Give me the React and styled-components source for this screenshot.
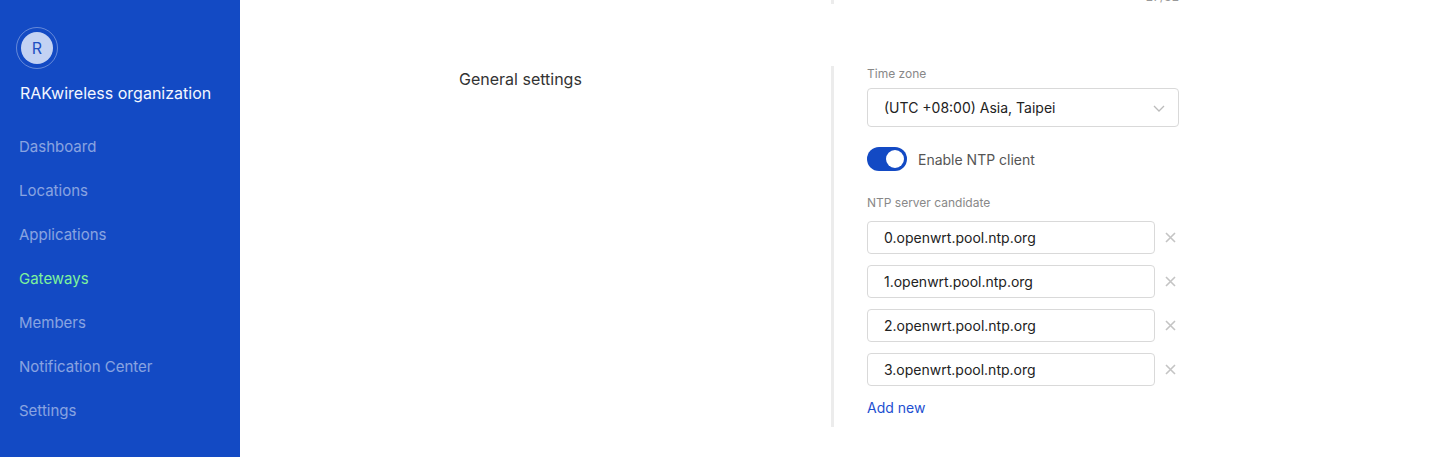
import React from 'react'
import styled, { createGlobalStyle } from 'styled-components'

const GlobalStyle = createGlobalStyle`
  html, body { margin: 0; padding: 0; background: #fff; }
  body { font-family: Inter, "Noto Sans", sans-serif; overflow: hidden; }
  * { box-sizing: border-box; }
`

const Layout = styled.div`
  display: flex;
  height: 457px;
  overflow: hidden;
`

const Sidebar = styled.aside`
  width: 240px;
  flex-shrink: 0;
  background: #134ac4;
  padding: 27px 0 0 0;
`

const Avatar = styled.div`
  margin-left: 16px;
  width: 42px;
  height: 42px;
  border-radius: 50%;
  border: 1px solid rgba(255, 255, 255, 0.35);
  display: flex;
  align-items: center;
  justify-content: center;
  span {
    width: 32px;
    height: 32px;
    border-radius: 50%;
    background: #c3d2f3;
    color: #1e4fc2;
    font-size: 16px;
    display: flex;
    align-items: center;
    justify-content: center;
  }
`

const OrgName = styled.div`
  margin: 14px 0 0 20px;
  color: #f4f7ff;
  font-size: 16px;
  line-height: 20px;
`

const Nav = styled.nav`
  margin-top: 34px;
  display: flex;
  flex-direction: column;
`

const NavItem = styled.a`
  display: block;
  padding-left: 19px;
  height: 44px;
  line-height: 20px;
  font-size: 15px;
  color: ${p => (p.$active ? '#7ef29b' : 'rgba(255,255,255,0.5)')};
  text-decoration: none;
`

const Main = styled.main`
  flex: 1;
  display: flex;
  justify-content: center;
`

const Container = styled.div`
  width: 764px;
  margin-left: -2px;
  display: flex;
  flex-direction: column;
`

const Section = styled.section`
  display: grid;
  grid-template-columns: 373px 1fr;
  margin-top: ${p => p.$top || '0'};
`

const SectionTitle = styled.h3`
  margin: 0;
  padding: 3px 0 0 1px;
  font-size: 16px;
  font-weight: 400;
  color: #333;
`

const Fields = styled.div`
  border-left: 3px solid #ececec;
  padding: 0 0 10px 33px;
  display: flex;
  flex-direction: column;
`

const Counter = styled.div`
  width: 312px;
  text-align: right;
  font-size: 12px;
  color: #999;
  line-height: 14px;
`

const Label = styled.div`
  font-size: 12px;
  color: #888;
  line-height: 16px;
  margin-bottom: ${p => p.$gap || '6px'};
`

const Select = styled.div`
  width: 312px;
  height: 39px;
  border: 1px solid #d9d9d9;
  border-radius: 4px;
  display: flex;
  align-items: center;
  justify-content: space-between;
  padding: 0 12px 0 16px;
  font-size: 14px;
  color: #222;
`

const ToggleRow = styled.div`
  display: flex;
  align-items: center;
  gap: 11px;
  margin-top: 20px;
  font-size: 14px;
  color: #555;
`

const Switch = styled.div`
  width: 40px;
  height: 24px;
  border-radius: 12px;
  background: #134ac4;
  display: flex;
  align-items: center;
  justify-content: flex-end;
  padding-right: 3px;
  &::after {
    content: '';
    width: 18px;
    height: 18px;
    border-radius: 50%;
    background: #fff;
  }
`

const ServerList = styled.div`
  margin-top: 24px;
  display: flex;
  flex-direction: column;
  gap: 11px;
`

const ServerRow = styled.div`
  display: flex;
  align-items: center;
  gap: 10px;
`

const Input = styled.div`
  width: 288px;
  height: 33px;
  border: 1px solid #d9d9d9;
  border-radius: 4px;
  padding-left: 16px;
  display: flex;
  align-items: center;
  font-size: 14px;
  color: #222;
`

const Remove = styled.span`
  width: 12px;
  display: flex;
`

const AddLink = styled.a`
  margin-top: 13px;
  font-size: 14px;
  color: #1d4fd1;
  line-height: 18px;
`

const servers = [
  '0.openwrt.pool.ntp.org',
  '1.openwrt.pool.ntp.org',
  '2.openwrt.pool.ntp.org',
  '3.openwrt.pool.ntp.org',
]

const navItems = ['Dashboard', 'Locations', 'Applications', 'Gateways', 'Members', 'Notification Center', 'Settings']

const App = () => {
  return (
    <Layout>
      <GlobalStyle />
      <Sidebar>
        <Avatar><span>R</span></Avatar>
        <OrgName>RAKwireless organization</OrgName>
        <Nav>
          {navItems.map(n => (
            <NavItem key={n} $active={n === 'Gateways'}>{n}</NavItem>
          ))}
        </Nav>
      </Sidebar>
      <Main>
        <Container>
          <Section $top="-10px">
            <div />
            <Fields style={{ paddingBottom: 0 }}>
              <Counter>27/32</Counter>
            </Fields>
          </Section>
          <Section $top="62px">
            <SectionTitle>General settings</SectionTitle>
            <Fields>
              <Label>Time zone</Label>
              <Select>
                (UTC +08:00) Asia, Taipei
                <svg width="14" height="14" viewBox="0 0 14 14">
                  <path d="M2 5l5 5 5-5" fill="none" stroke="#bbb" strokeWidth="1.3" />
                </svg>
              </Select>
              <ToggleRow>
                <Switch />
                Enable NTP client
              </ToggleRow>
              <ServerList>
                <Label $gap="-1px">NTP server candidate</Label>
                {servers.map(s => (
                  <ServerRow key={s}>
                    <Input>{s}</Input>
                    <Remove>
                      <svg width="11" height="11" viewBox="0 0 11 11">
                        <path d="M1 1l9 9M10 1l-9 9" stroke="#c4c4c4" strokeWidth="1.6" />
                      </svg>
                    </Remove>
                  </ServerRow>
                ))}
              </ServerList>
              <AddLink>Add new</AddLink>
            </Fields>
          </Section>
        </Container>
      </Main>
    </Layout>
  )
}

export default App
